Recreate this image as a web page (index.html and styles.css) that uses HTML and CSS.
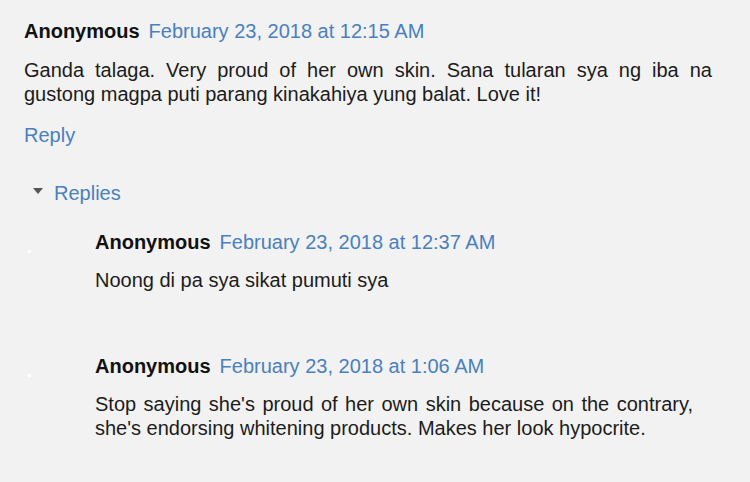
FILE: index.html
```html
<!DOCTYPE html>
<html>
<head>
<meta charset="utf-8">
<link rel="stylesheet" href="styles.css">
</head>
<body>
<div class="comments">
  <div class="comment">
    <div class="comment-header"><span class="author">Anonymous</span><a class="date" href="#">February 23, 2018 at 12:15 AM</a></div>
    <p class="comment-body">Ganda talaga. Very proud of her own skin. Sana tularan sya ng iba na gustong magpa puti parang kinakahiya yung balat. Love it!</p>
    <a class="reply-link" href="#">Reply</a>
  </div>
  <div class="replies-toggle"><span class="caret"></span><a class="replies-link" href="#">Replies</a></div>
  <div class="thread">
    <div class="reply">
      <div class="avatar"><span class="dot"></span></div>
      <div class="reply-content">
        <div class="comment-header"><span class="author">Anonymous</span><a class="date" href="#">February 23, 2018 at 12:37 AM</a></div>
        <p class="reply-body">Noong di pa sya sikat pumuti sya</p>
      </div>
    </div>
    <div class="reply">
      <div class="avatar"><span class="dot"></span></div>
      <div class="reply-content">
        <div class="comment-header"><span class="author">Anonymous</span><a class="date" href="#">February 23, 2018 at 1:06 AM</a></div>
        <p class="reply-body">Stop saying she's proud of her own skin because on the contrary, she's endorsing whitening products. Makes her look hypocrite.</p>
      </div>
    </div>
  </div>
</div>
</body>
</html>
```
FILE: styles.css
```css
html, body {
  margin: 0;
  padding: 0;
  background: #f2f2f2;
}
body {
  font-family: "Liberation Sans", Arial, sans-serif;
  font-size: 20px;
  line-height: 24px;
  color: #1c1c1c;
  width: 750px;
  height: 482px;
  overflow: hidden;
}
a {
  color: #4a80bd;
  text-decoration: none;
}
.comments {
  padding: 19px 38px 0 24px;
}
.comment-header {
  display: flex;
  align-items: baseline;
}
.author {
  font-weight: bold;
  color: #111;
}
.date {
  margin-left: 9px;
}
.comment-body {
  margin: 15px 0 17px;
  text-align: justify;
}
.reply-link {
  display: block;
}
.replies-toggle {
  display: flex;
  align-items: center;
  margin-top: 34px;
}
.caret {
  width: 0;
  height: 0;
  border-left: 5.5px solid transparent;
  border-right: 5.5px solid transparent;
  border-top: 6px solid #555;
  margin: 0 11px 0 9px;
  position: relative;
  top: -2px;
}
.thread {
  margin-top: 25px;
}
.reply {
  display: flex;
  margin-bottom: 62px;
}
.avatar {
  width: 71px;
  flex: none;
}
.dot {
  display: block;
  width: 3px;
  height: 3px;
  background: #fff;
  margin: 20px 0 0 4px;
}
.reply-content {
  flex: 1;
  padding-right: 19px;
}
.reply-body {
  margin: 14px 0 0;
  text-align: justify;
}
```
